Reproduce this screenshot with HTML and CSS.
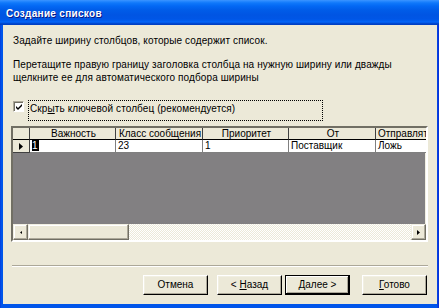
FILE: index.html
```html
<!DOCTYPE html>
<html lang="ru">
<head>
<meta charset="utf-8">
<title>Создание списков</title>
<link rel="stylesheet" href="styles.css">
</head>
<body>
<div class="window">
  <div class="titlebar"><span class="title">Создание списков</span></div>
  <div class="client">
    <p class="intro">Задайте ширину столбцов, которые содержит список.</p>
    <p class="help">Перетащите правую границу заголовка столбца на нужную ширину или дважды<br>щелкните ее для автоматического подбора ширины</p>
    <div class="check-row">
      <span class="box"><svg width="7" height="7" viewBox="0 0 7 7"><path d="M0 2 L2 4 L6 0 L6 2 L2 6 L0 4 Z" fill="#000"/></svg></span>
      <span class="focus">Скр<u>ы</u>ть ключевой столбец (рекомендуется)</span>
    </div>
    <div class="grid">
      <div class="sheet">
        <table>
          <colgroup>
            <col class="c-sel"><col class="c-col"><col class="c-col2"><col class="c-col"><col class="c-col2"><col class="c-last">
          </colgroup>
          <thead>
            <tr><th></th><th>Важность</th><th>Класс сообщения</th><th>Приоритет</th><th>От</th><th>Отправлять уведомление о прочтении</th></tr>
          </thead>
          <tbody>
            <tr>
              <td class="sel"><svg width="4" height="7" viewBox="0 0 4 7"><path d="M0 0 L4 3.5 L0 7 Z" fill="#000"/></svg></td>
              <td><span class="cur">1</span></td><td>23</td><td>1</td><td>Поставщик</td><td>Ложь</td>
            </tr>
          </tbody>
        </table>
        <div class="empty"></div>
      </div>
      <div class="hscroll">
        <span class="sbtn"><svg width="2" height="3" viewBox="0 0 2 3"><path d="M2 0 L0 1.5 L2 3 Z" fill="#000"/></svg></span>
        <span class="thumb"></span>
        <span class="track"></span>
        <span class="sbtn"><svg width="3" height="5" viewBox="0 0 3 5"><path d="M0 0 L3 2.5 L0 5 Z" fill="#000"/></svg></span>
      </div>
    </div>
    <div class="sep"></div>
    <div class="buttons">
      <button class="btn cancel">Отмена</button>
      <button class="btn back">&lt; <u>Н</u>азад</button>
      <button class="btn next def"><u>Д</u>алее &gt;</button>
      <button class="btn finish"><u>Г</u>отово</button>
    </div>
  </div>
</div>
</body>
</html>
```

FILE: styles.css
```css
* { box-sizing: border-box; }
html, body { margin: 0; padding: 0; }
body {
  width: 439px;
  height: 308px;
  overflow: hidden;
  font-family: "Liberation Sans", Arial, sans-serif;
  font-size: 10px;
  color: #000;
}
.window {
  width: 439px;
  height: 308px;
  display: flex;
  flex-direction: column;
  background: linear-gradient(to right, #0831D9 0, #0055EA 1px, #0055EA 437px, #0831D9 438px);
}
.titlebar {
  height: 25px;
  flex: none;
  display: flex;
  align-items: center;
  padding: 2px 0 0 6px;
  background: linear-gradient(to bottom, #3D95FF 0, #2A8AFF 1px, #0F78FA 3px, #0368F4 6px, #005CE8 10px, #0055E3 15px, #0056E6 19px, #005DF0 21px, #0567FA 22px, #0050DC 23px, #003FC4 24px, #003FC4 25px);
}
.title {
  color: #fff;
  font-weight: bold;
  font-size: 10px;
  letter-spacing: 0.3px;
  text-shadow: 1px 1px 0 #0A1883;
}
.client {
  flex: 1;
  margin: 0 2px 4px 3px;
  background: #ECE9D8;
  padding: 9px 9px 0 8px;
  display: flex;
  flex-direction: column;
}
.intro, .help {
  margin: 0;
  padding-left: 2px;
  line-height: 13px;
  letter-spacing: 0.1px;
}
.help { margin-top: 11px; }
.check-row {
  margin-top: 16px;
  height: 21px;
  display: flex;
  align-items: flex-start;
}
.box {
  margin: 1px 0 0 2px;
  width: 11px;
  height: 11px;
  background: #fff;
  border: 1px solid;
  border-color: #ACA899 #fff #fff #ACA899;
  box-shadow: inset 1px 1px 0 #716F64;
  display: flex;
  align-items: center;
  justify-content: center;
  padding: 1px 0 0 1px;
}
.focus {
  margin-left: 4px;
  width: 295px;
  height: 21px;
  border: 1px dotted #000;
  padding: 1px 0 0 1px;
  line-height: 13px;
  letter-spacing: 0.1px;
}
.focus u, .btn u { text-decoration: underline; }
.grid {
  margin-top: 5px;
  width: 417px;
  height: 116px;
  border: 2px solid;
  border-color: #716F64 #fff #fff #716F64;
  box-shadow: inset -1px -1px 0 #F1EFE2;
  display: flex;
  flex-direction: column;
  background: #828082;
}
.sheet {
  flex: 1;
  overflow: hidden;
  display: flex;
  flex-direction: column;
}
table {
  border-collapse: separate;
  border-spacing: 0;
  table-layout: fixed;
  width: 500px;
  flex: none;
}
.c-sel { width: 17px; }
.c-col { width: 86px; }
.c-col2 { width: 87px; }
.c-last { width: 137px; }
th, td {
  padding: 0 0 0 2px;
  white-space: nowrap;
  overflow: hidden;
  font-weight: normal;
  text-align: left;
  line-height: 12px;
}
th {
  height: 12px;
  background: #ECE9D8;
  text-align: center;
  border-right: 1px solid #404040;
  border-bottom: 1px solid #000;
  line-height: 11px;
}
td {
  height: 13px;
  background: #fff;
  border-right: 1px solid #808080;
  border-bottom: 1px solid #808080;
}
td.sel {
  background: #ECE9D8;
  border-right: 1px solid #404040;
  border-bottom: 1px solid #404040;
  padding: 0 0 0 6px;
  vertical-align: middle;
}
td.sel svg { display: block; }
.cur {
  display: inline-block;
  background: #000;
  color: #fff;
  padding: 0 1px 0 0;
  line-height: 11px;
}
.empty { flex: 1; }
.hscroll {
  height: 16px;
  flex: none;
  display: flex;
  background: #ECE9D8;
}
.sbtn, .thumb {
  height: 16px;
  background: #ECE9D8;
  border: 1px solid;
  border-color: #F1EFE2 #716F64 #716F64 #F1EFE2;
  box-shadow: inset -1px -1px 0 #ACA899, inset 1px 1px 0 #fff;
}
.sbtn {
  width: 15px;
  display: flex;
  align-items: center;
  justify-content: center;
}
.thumb { width: 101px; }
.track {
  flex: 1;
  background: repeating-conic-gradient(#fff 0 25%, #ECE9D8 0 50%) 0 0 / 2px 2px;
}
.sep {
  margin-top: 23px;
  width: 416px;
  margin-left: 1px;
  height: 2px;
  border-top: 1px solid #ACA899;
  border-bottom: 1px solid #fff;
}
.buttons {
  margin-top: 8px;
  display: flex;
  padding-left: 132px;
}
.btn {
  font-family: "Liberation Sans", Arial, sans-serif;
  font-size: 10px;
  color: #000;
  width: 65px;
  height: 20px;
  padding: 0;
  background: #ECE9D8;
  border: 1px solid;
  border-color: #fff #000 #000 #fff;
  box-shadow: inset -1px -1px 0 #ACA899, inset 1px 1px 0 #F1EFE2;
  text-align: center;
  line-height: 16px;
}
.back { margin-left: 9px; }
.next { margin-left: 3px; }
.finish { margin-left: 12px; }
.def {
  border: 1px solid #000;
  box-shadow: inset -1px -1px 0 #000, inset 1px 1px 0 #fff, inset -2px -2px 0 #ACA899;
}
```
